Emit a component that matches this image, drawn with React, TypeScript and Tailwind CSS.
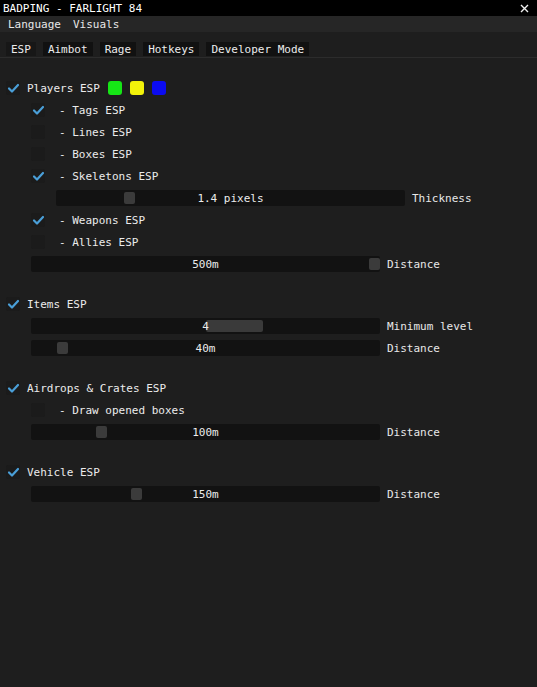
const font = { fontFamily: '"DejaVu Sans Mono", "Liberation Mono", monospace' };

type Row =
  | { kind: "check"; label: string; checked: boolean; indent?: boolean; colors?: string[] }
  | { kind: "slider"; value: string; label: string; thumb: number; indent?: boolean; grab?: boolean }
  | { kind: "gap" };

const rows: Row[] = [
  { kind: "check", label: "Players ESP", checked: true, colors: ["bg-[#16e616]", "bg-[#f2f20a]", "bg-[#0b0bf0]"] },
  { kind: "check", label: "- Tags ESP", checked: true, indent: true },
  { kind: "check", label: "- Lines ESP", checked: false, indent: true },
  { kind: "check", label: "- Boxes ESP", checked: false, indent: true },
  { kind: "check", label: "- Skeletons ESP", checked: true, indent: true },
  { kind: "slider", value: "1.4 pixels", label: "Thickness", thumb: 68, indent: true },
  { kind: "check", label: "- Weapons ESP", checked: true, indent: true },
  { kind: "check", label: "- Allies ESP", checked: false, indent: true },
  { kind: "slider", value: "500m", label: "Distance", thumb: 338 },
  { kind: "gap" },
  { kind: "check", label: "Items ESP", checked: true },
  { kind: "slider", value: "4", label: "Minimum level", thumb: 0, grab: true },
  { kind: "slider", value: "40m", label: "Distance", thumb: 26 },
  { kind: "gap" },
  { kind: "check", label: "Airdrops & Crates ESP", checked: true },
  { kind: "check", label: "- Draw opened boxes", checked: false, indent: true },
  { kind: "slider", value: "100m", label: "Distance", thumb: 65 },
  { kind: "gap" },
  { kind: "check", label: "Vehicle ESP", checked: true },
  { kind: "slider", value: "150m", label: "Distance", thumb: 100 },
];

const tabs = ["ESP", "Aimbot", "Rage", "Hotkeys", "Developer Mode"];

function CheckBox({ checked }: { checked: boolean }) {
  return (
    <div className="w-[14px] h-[14px] rounded-[2px] bg-[#1b1b1b] flex items-center justify-center">
      {checked && (
        <svg width="13" height="13" viewBox="0 0 13 13">
          <polyline points="2,6.5 5,9.5 11,3" fill="none" stroke="#4a9fd8" strokeWidth="2.2" strokeLinecap="round" strokeLinejoin="round" />
        </svg>
      )}
    </div>
  );
}

function SliderRow({ row }: { row: Extract<Row, { kind: "slider" }> }) {
  return (
    <div className={`h-[22px] flex items-center gap-[7px] ${row.indent ? "pl-[56px]" : "pl-[31px]"}`}>
      <div className="relative w-[349px] h-[16px] rounded-[2px] bg-[#121212] flex items-center justify-center">
        {row.grab ? (
          <div className="absolute left-[175px] top-[2px] w-[57px] h-[12px] rounded-[2px] bg-[#3a3a3a]" />
        ) : (
          <div className="absolute top-[2px] w-[11px] h-[12px] rounded-[2px] bg-[#3b3b3b]" style={{ left: row.thumb }} />
        )}
        <span className="relative text-[#ececec]">{row.value}</span>
      </div>
      <span className="text-[#e8e8e8]">{row.label}</span>
    </div>
  );
}

export default function App() {
  return (
    <div className="w-[537px] h-[687px] bg-[#1e1e1e] flex flex-col text-[11px] leading-none overflow-hidden" style={font}>
      <div className="h-[16px] bg-black flex items-center justify-between px-[3px] text-white">
        <span>BADPING - FARLIGHT 84</span>
        <svg width="9" height="9" viewBox="0 0 9 9" className="mr-[5px]">
          <path d="M1 1L8 8M8 1L1 8" stroke="#f0f0f0" strokeWidth="1.4" />
        </svg>
      </div>
      <div className="h-[16px] bg-[#262626] flex items-center gap-[12px] pl-[8px] text-[#e8e8e8]">
        <span>Language</span>
        <span>Visuals</span>
      </div>
      <div className="flex items-center gap-[7px] pl-[6px] pt-[10px] pb-[1px] border-b border-[#2c2c2c]">
        {tabs.map((t, i) => (
          <div key={t} className={`h-[14px] px-[5px] flex items-center text-[#ececec] ${i === 0 ? "bg-[#171717]" : "bg-[#111111]"}`}>
            {t}
          </div>
        ))}
      </div>
      <div className="flex flex-col pt-[19px]">
        {rows.map((row, i) => {
          if (row.kind === "gap") return <div key={i} className="h-[18px]" />;
          if (row.kind === "slider") return <SliderRow key={i} row={row} />;
          return (
            <div key={i} className={`h-[22px] flex items-center ${row.indent ? "pl-[31px] gap-[14px]" : "pl-[6px] gap-[7px]"}`}>
              <CheckBox checked={row.checked} />
              <span className="text-[#ececec]">{row.label}</span>
              {row.colors && (
                <div className="flex gap-[8px] ml-[1px]">
                  {row.colors.map((c) => (
                    <div key={c} className={`w-[14px] h-[14px] rounded-[3px] ${c}`} />
                  ))}
                </div>
              )}
            </div>
          );
        })}
      </div>
    </div>
  );
}
